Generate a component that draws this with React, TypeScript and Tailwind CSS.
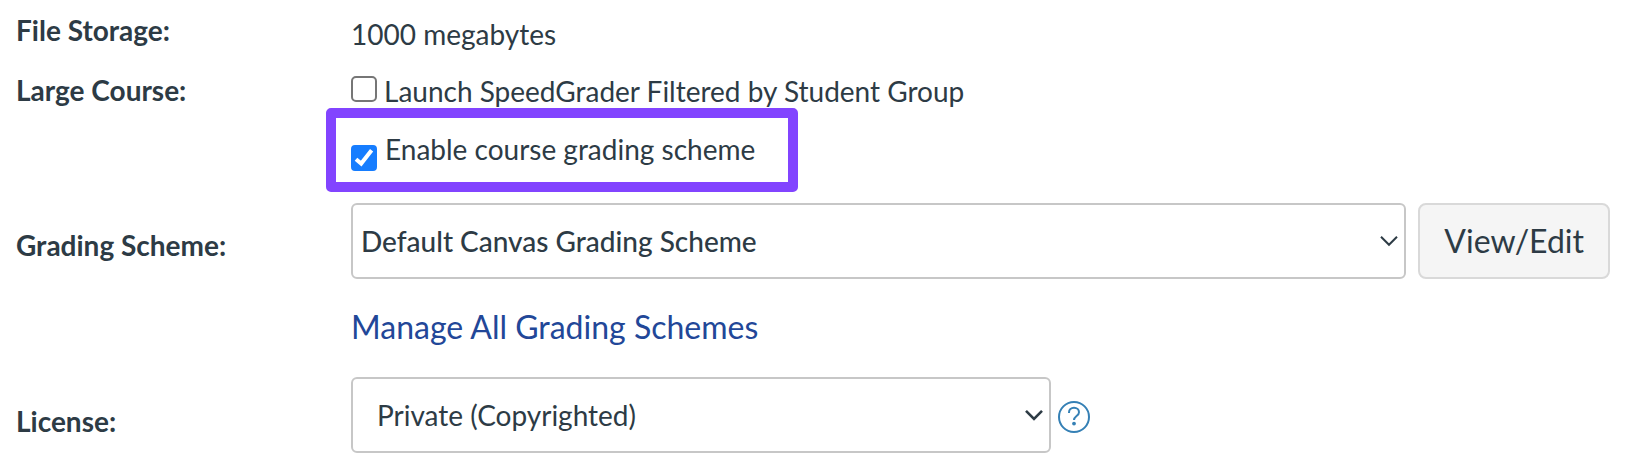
import { useState } from "react";
import type { ReactNode } from "react";

function Row({ label, htmlFor, className, labelClassName, children }: {
  label: string;
  htmlFor?: string;
  className?: string;
  labelClassName?: string;
  children: ReactNode;
}) {
  return (
    <div className={`grid grid-cols-[335px_minmax(0,1fr)] items-start ${className ?? ""}`}>
      <label htmlFor={htmlFor} className={`font-bold ${labelClassName ?? ""}`}>
        {label}
      </label>
      <div>{children}</div>
    </div>
  );
}

function Checkbox({ id, checked, onChange }: { id: string; checked: boolean; onChange: (v: boolean) => void }) {
  return (
    <span className="relative block size-[26px] shrink-0">
      <input
        id={id}
        type="checkbox"
        checked={checked}
        onChange={(e) => onChange(e.target.checked)}
        className="block size-full appearance-none rounded-[5px] border-2 border-[#767676] bg-white checked:rounded-[4px] checked:border-[#167dff] checked:bg-[#167dff]"
      />
      {checked && (
        <svg viewBox="0 0 26 26" className="pointer-events-none absolute inset-0 size-full" fill="none" stroke="#fff" strokeWidth="4">
          <path d="M5 14.2 L10.2 18.6 L20.6 5.2" />
        </svg>
      )}
    </span>
  );
}

function Chevron({ strokeWidth }: { strokeWidth: number }) {
  return (
    <svg
      viewBox="0 0 18 12"
      className="pointer-events-none absolute top-1/2 right-2 h-3 w-[18px] -translate-y-1/2"
      fill="none"
      stroke="#2d3b45"
      strokeWidth={strokeWidth}
    >
      <path d="M1 1.8 L9 9.8 L17 1.8" />
    </svg>
  );
}

export default function App() {
  const [filtered, setFiltered] = useState(false);
  const [gradingScheme, setGradingScheme] = useState(true);

  return (
    <form className="bg-white pt-3.5 pr-[30px] pb-[15px] pl-4 font-['Lato',sans-serif] text-[28px] leading-8 text-[#2d3b45]">
      <Row label="File Storage:">
        <p className="mt-1">1000 megabytes</p>
      </Row>

      <Row label="Large Course:" htmlFor="filter_speed_grader" className="mt-6">
        <div className="mt-px flex items-start gap-[7px]">
          <span className="mt-px">
            <Checkbox id="filter_speed_grader" checked={filtered} onChange={setFiltered} />
          </span>
          <label htmlFor="filter_speed_grader">Launch SpeedGrader Filtered by Student Group</label>
        </div>
        <div className="mt-px -ml-[25px] flex w-fit items-start gap-2 rounded-[5px] border-10 border-[#8244ff] pt-[15px] pr-[33px] pb-[17px] pl-[15px]">
          <span className="-mb-2 mt-3">
            <Checkbox id="grading_standard" checked={gradingScheme} onChange={setGradingScheme} />
          </span>
          <label htmlFor="grading_standard">Enable course grading scheme</label>
        </div>
      </Row>

      <Row label="Grading Scheme:" htmlFor="scheme_select" className="mt-[11px]" labelClassName="mt-[26px]">
        <div className="flex gap-3">
          <div className="relative min-w-0 flex-1">
            <select
              id="scheme_select"
              className="h-19 w-full appearance-none rounded-md border-2 border-[#c7c7c7] bg-white pr-10 pl-2 font-medium"
            >
              <option>Default Canvas Grading Scheme</option>
            </select>
            <Chevron strokeWidth={2} />
          </div>
          <button type="button" className="h-19 rounded-lg border-2 border-[#d9d9d9] bg-[#f5f5f5] px-6 text-[32px]">
            View/Edit
          </button>
        </div>
        <a href="#schemes" className="mt-7 block w-fit text-[32px] leading-10 text-[#224798]">
          Manage All Grading Schemes
        </a>
      </Row>

      <Row label="License:" htmlFor="course_license" className="mt-[30px]" labelClassName="mt-7">
        <div className="flex items-start gap-[7px]">
          <div className="relative w-[700px]">
            <select
              id="course_license"
              className="h-19 w-full appearance-none rounded-md border-2 border-[#c7c7c7] bg-white pr-10 pl-6"
            >
              <option>Private (Copyrighted)</option>
            </select>
            <Chevron strokeWidth={2.6} />
          </div>
          <a href="#license-help" aria-label="Help with content licensing" className="mt-6">
            <svg viewBox="0 0 32 32" className="size-8" fill="none" stroke="#3580b5" strokeWidth="2">
              <circle cx="16" cy="16" r="15" />
              <path d="M11 12 V11.4 C11 8.6 13.2 6.8 16 6.8 C18.9 6.8 21 8.7 21 11.2 C21 15 16 15 16 19" />
              <circle cx="16" cy="22.6" r="1.9" fill="#3580b5" stroke="none" />
            </svg>
          </a>
        </div>
      </Row>
    </form>
  );
}
